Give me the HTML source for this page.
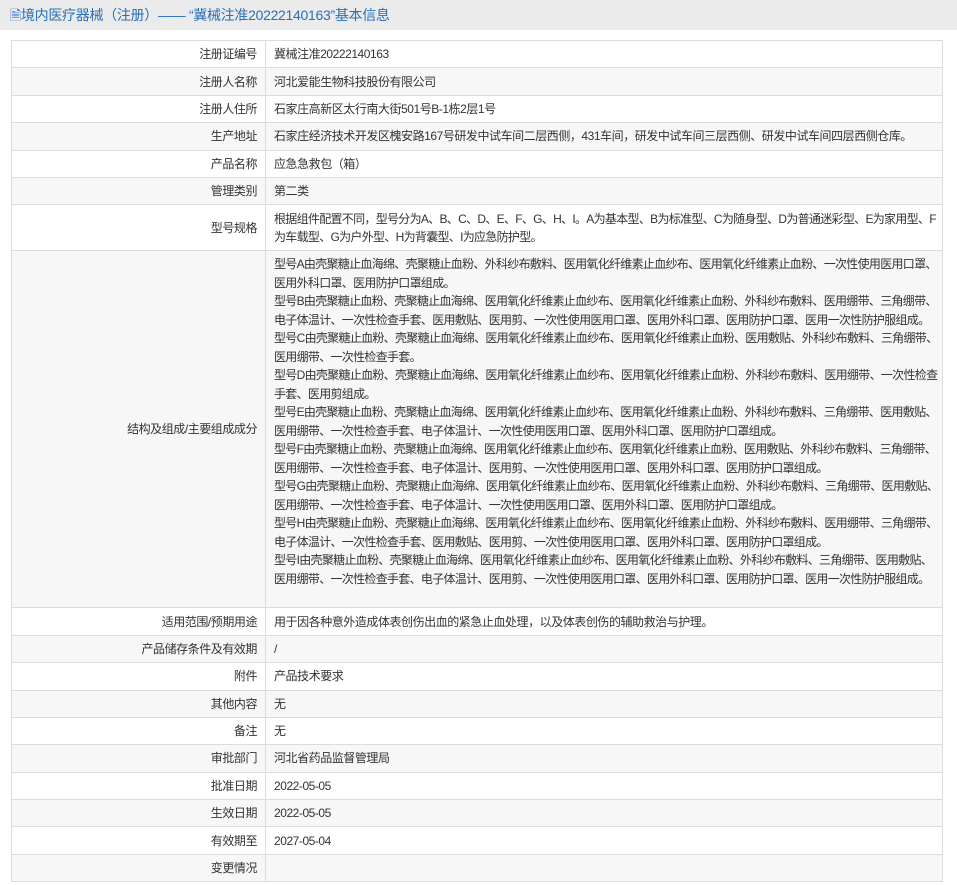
<!DOCTYPE html>
<html><head><meta charset="utf-8"><style>
body{margin:0;width:957px;height:885px;background:#fff;font-family:"Liberation Sans","Noto Sans CJK SC",sans-serif;font-size:12px;color:#333;overflow:hidden}
.hd{height:30px;background:#ebebeb;color:#2a6fb8;font-size:14px;line-height:30px;padding-left:10px;letter-spacing:-0.3px}
table{position:absolute;left:11px;top:40px;width:932px;border-collapse:collapse;table-layout:fixed}
td{border:1px solid #dcdcdc;padding:0 8px;height:26.4px;vertical-align:middle;line-height:18px;letter-spacing:-0.45px;overflow:hidden;white-space:nowrap}
td.l{text-align:right;}
tr:nth-child(even) td{background:#f7f7f7}
.m td{padding:0 8px;line-height:18px}
.m td.v{letter-spacing:-0.7px}
</style></head><body>
<div class="hd">🗎境内医疗器械（注册）—— “冀械注准20222140163”基本信息</div>
<table>
<col style="width:254px"><col>
<tr><td class="l">注册证编号</td><td>冀械注准20222140163</td></tr>
<tr><td class="l">注册人名称</td><td>河北爱能生物科技股份有限公司</td></tr>
<tr><td class="l">注册人住所</td><td>石家庄高新区太行南大街501号B-1栋2层1号</td></tr>
<tr><td class="l">生产地址</td><td>石家庄经济技术开发区槐安路167号研发中试车间二层西侧，431车间，研发中试车间三层西侧、研发中试车间四层西侧仓库。</td></tr>
<tr><td class="l">产品名称</td><td>应急急救包（箱）</td></tr>
<tr><td class="l">管理类别</td><td>第二类</td></tr>
<tr class="m"><td class="l" style="height:45px">型号规格</td><td class="v">根据组件配置不同，型号分为A、B、C、D、E、F、G、H、I。A为基本型、B为标准型、C为随身型、D为普通迷彩型、E为家用型、F<br>为车载型、G为户外型、H为背囊型、I为应急防护型。</td></tr>
<tr class="m"><td class="l" style="height:356px">结构及组成/主要组成成分</td><td class="v" style="vertical-align:top;padding-top:4px;line-height:18.5px">型号A由壳聚糖止血海绵、壳聚糖止血粉、外科纱布敷料、医用氧化纤维素止血纱布、医用氧化纤维素止血粉、一次性使用医用口罩、<br>医用外科口罩、医用防护口罩组成。<br>型号B由壳聚糖止血粉、壳聚糖止血海绵、医用氧化纤维素止血纱布、医用氧化纤维素止血粉、外科纱布敷料、医用绷带、三角绷带、<br>电子体温计、一次性检查手套、医用敷贴、医用剪、一次性使用医用口罩、医用外科口罩、医用防护口罩、医用一次性防护服组成。<br>型号C由壳聚糖止血粉、壳聚糖止血海绵、医用氧化纤维素止血纱布、医用氧化纤维素止血粉、医用敷贴、外科纱布敷料、三角绷带、<br>医用绷带、一次性检查手套。<br>型号D由壳聚糖止血粉、壳聚糖止血海绵、医用氧化纤维素止血纱布、医用氧化纤维素止血粉、外科纱布敷料、医用绷带、一次性检查<br>手套、医用剪组成。<br>型号E由壳聚糖止血粉、壳聚糖止血海绵、医用氧化纤维素止血纱布、医用氧化纤维素止血粉、外科纱布敷料、三角绷带、医用敷贴、<br>医用绷带、一次性检查手套、电子体温计、一次性使用医用口罩、医用外科口罩、医用防护口罩组成。<br>型号F由壳聚糖止血粉、壳聚糖止血海绵、医用氧化纤维素止血纱布、医用氧化纤维素止血粉、医用敷贴、外科纱布敷料、三角绷带、<br>医用绷带、一次性检查手套、电子体温计、医用剪、一次性使用医用口罩、医用外科口罩、医用防护口罩组成。<br>型号G由壳聚糖止血粉、壳聚糖止血海绵、医用氧化纤维素止血纱布、医用氧化纤维素止血粉、外科纱布敷料、三角绷带、医用敷贴、<br>医用绷带、一次性检查手套、电子体温计、一次性使用医用口罩、医用外科口罩、医用防护口罩组成。<br>型号H由壳聚糖止血粉、壳聚糖止血海绵、医用氧化纤维素止血纱布、医用氧化纤维素止血粉、外科纱布敷料、医用绷带、三角绷带、<br>电子体温计、一次性检查手套、医用敷贴、医用剪、一次性使用医用口罩、医用外科口罩、医用防护口罩组成。<br>型号I由壳聚糖止血粉、壳聚糖止血海绵、医用氧化纤维素止血纱布、医用氧化纤维素止血粉、外科纱布敷料、三角绷带、医用敷贴、<br>医用绷带、一次性检查手套、电子体温计、医用剪、一次性使用医用口罩、医用外科口罩、医用防护口罩、医用一次性防护服组成。</td></tr>
<tr><td class="l">适用范围/预期用途</td><td>用于因各种意外造成体表创伤出血的紧急止血处理，以及体表创伤的辅助救治与护理。</td></tr>
<tr><td class="l">产品储存条件及有效期</td><td>/</td></tr>
<tr><td class="l">附件</td><td>产品技术要求</td></tr>
<tr><td class="l">其他内容</td><td>无</td></tr>
<tr><td class="l">备注</td><td>无</td></tr>
<tr><td class="l">审批部门</td><td>河北省药品监督管理局</td></tr>
<tr><td class="l">批准日期</td><td>2022-05-05</td></tr>
<tr><td class="l">生效日期</td><td>2022-05-05</td></tr>
<tr><td class="l">有效期至</td><td>2027-05-04</td></tr>
<tr><td class="l">变更情况</td><td></td></tr>
</table>
</body></html>
